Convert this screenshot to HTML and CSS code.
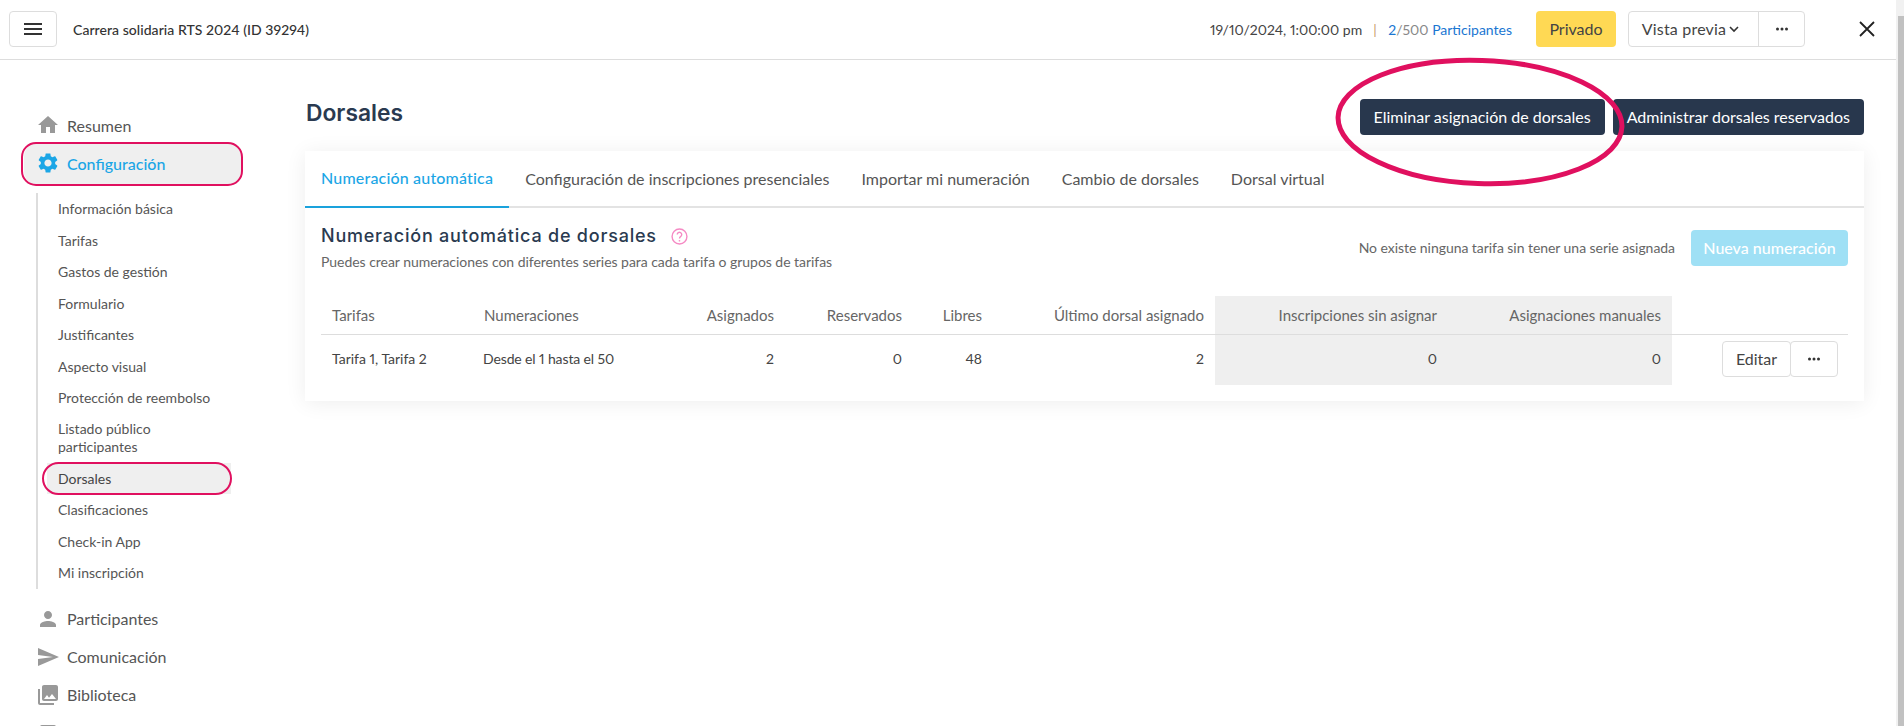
FILE: index.html
```html
<!DOCTYPE html>
<html lang="es">
<head>
<meta charset="utf-8">
<title>Dorsales</title>
<link rel="stylesheet" href="styles.css">
</head>
<body>
<div class="app">
  <header class="topbar">
    <button class="menu-btn"><svg class="ic24" viewBox="0 0 24 24"><path d="M3 18h18v-2H3v2zm0-5h18v-2H3v2zm0-7v2h18V6H3z"/></svg></button>
    <div class="event-title">Carrera solidaria RTS 2024 (ID 39294)</div>
    <div class="top-right">
      <span class="date">19/10/2024, 1:00:00 pm</span>
      <span class="sep">|</span>
      <span class="count"><b>2</b><i>/500</i> Participantes</span>
      <span class="private">Privado</span>
      <div class="group">
        <span class="preview">Vista previa <svg class="chev" viewBox="0 0 12 12"><path d="M2 4l4 4 4-4"/></svg></span>
        <span class="more"><svg class="dots" viewBox="0 0 14 4"><circle cx="2.5" cy="2" r="1.5"/><circle cx="7" cy="2" r="1.5"/><circle cx="11.5" cy="2" r="1.5"/></svg></span>
      </div>
      <svg class="close" viewBox="0 0 16 16"><path d="M1 1l14 14M15 1L1 15"/></svg>
    </div>
  </header>
  <div class="body">
    <nav class="sidebar">
      <a class="nav-item"><svg class="ic24" viewBox="0 0 24 24"><path d="M10 20v-6h4v6h5v-8h3L12 3 2 12h3v8z"/></svg>Resumen</a>
      <a class="nav-item active ring-host"><svg class="ic24" viewBox="0 0 24 24"><path d="M19.14 12.94c.04-.3.06-.61.06-.94 0-.32-.02-.64-.07-.94l2.03-1.58c.18-.14.23-.41.12-.61l-1.92-3.32c-.12-.22-.37-.29-.59-.22l-2.39.96c-.5-.38-1.03-.7-1.62-.94l-.36-2.54c-.04-.24-.24-.41-.48-.41h-3.84c-.24 0-.43.17-.47.41l-.36 2.54c-.59.24-1.13.57-1.62.94l-2.39-.96c-.22-.08-.47 0-.59.22L2.74 8.87c-.12.21-.08.47.12.61l2.03 1.58c-.05.3-.09.63-.09.94s.02.64.07.94l-2.03 1.58c-.18.14-.23.41-.12.61l1.92 3.32c.12.22.37.29.59.22l2.39-.96c.5.38 1.03.7 1.62.94l.36 2.54c.05.24.24.41.48.41h3.84c.24 0 .44-.17.47-.41l.36-2.54c.59-.24 1.13-.56 1.62-.94l2.39.96c.22.08.47 0 .59-.22l1.92-3.32c.12-.22.07-.47-.12-.61l-2.01-1.58zM12 15.6c-1.98 0-3.6-1.62-3.6-3.6s1.62-3.6 3.6-3.6 3.6 1.62 3.6 3.6-1.62 3.6-3.6 3.6z"/></svg>Configuración</a>
      <div class="sub">
        <a class="sub-item">Información básica</a>
        <a class="sub-item">Tarifas</a>
        <a class="sub-item">Gastos de gestión</a>
        <a class="sub-item">Formulario</a>
        <a class="sub-item">Justificantes</a>
        <a class="sub-item">Aspecto visual</a>
        <a class="sub-item">Protección de reembolso</a>
        <a class="sub-item two">Listado público<br>participantes</a>
        <a class="sub-item current ring-host">Dorsales</a>
        <a class="sub-item">Clasificaciones</a>
        <a class="sub-item">Check-in App</a>
        <a class="sub-item">Mi inscripción</a>
      </div>
      <a class="nav-item"><svg class="ic24" viewBox="0 0 24 24"><path d="M12 12c2.21 0 4-1.79 4-4s-1.79-4-4-4-4 1.79-4 4 1.79 4 4 4zm0 2c-2.67 0-8 1.34-8 4v2h16v-2c0-2.66-5.33-4-8-4z"/></svg>Participantes</a>
      <a class="nav-item"><svg class="ic24" viewBox="0 0 24 24"><path d="M2.01 21L23 12 2.01 3 2 10l15 2-15 2z"/></svg>Comunicación</a>
      <a class="nav-item"><svg class="ic24" viewBox="0 0 24 24"><path d="M22 16V4c0-1.1-.9-2-2-2H8c-1.1 0-2 .9-2 2v12c0 1.1.9 2 2 2h12c1.1 0 2-.9 2-2zm-11-4l2.03 2.71L16 11l4 5H8l3-4zM2 6v14c0 1.1.9 2 2 2h14v-2H4V6H2z"/></svg>Biblioteca</a>
      <a class="nav-item"><svg class="ic24" viewBox="0 0 24 24"><rect x="4" y="4" width="16" height="16" rx="2"/></svg></a>
    </nav>
    <main class="main">
      <div class="page-head">
        <h1>Dorsales</h1>
        <div class="head-actions">
          <button class="btn-dark">Eliminar asignación de dorsales</button>
          <button class="btn-dark">Administrar dorsales reservados</button>
        </div>
      </div>
      <section class="card">
        <div class="tabs">
          <a class="tab on">Numeración automática</a>
          <a class="tab">Configuración de inscripciones presenciales</a>
          <a class="tab">Importar mi numeración</a>
          <a class="tab">Cambio de dorsales</a>
          <a class="tab">Dorsal virtual</a>
        </div>
        <div class="card-body">
          <div class="sec-head">
            <div>
              <h2>Numeración automática de dorsales <svg class="help" viewBox="0 0 16 16"><circle cx="8" cy="8" r="7"/><path d="M5.9 6.2a2.1 2.1 0 1 1 3.3 1.7c-.8.5-1.2 1-1.2 1.9"/><circle class="help-dot" cx="8" cy="12" r=".8"/></svg></h2>
              <p>Puedes crear numeraciones con diferentes series para cada tarifa o grupos de tarifas</p>
            </div>
            <div class="sec-right">
              <span class="note">No existe ninguna tarifa sin tener una serie asignada</span>
              <button class="btn-new">Nueva numeración</button>
            </div>
          </div>
          <table class="grid">
            <colgroup>
              <col class="c1"><col class="c2"><col class="c3"><col class="c4"><col class="c5"><col class="c6"><col class="c7"><col class="c8"><col class="c9">
            </colgroup>
            <thead>
              <tr><th>Tarifas</th><th>Numeraciones</th><th class="r">Asignados</th><th class="r">Reservados</th><th class="r">Libres</th><th class="r">Último dorsal asignado</th><th class="r shade">Inscripciones sin asignar</th><th class="r shade">Asignaciones manuales</th><th></th></tr>
            </thead>
            <tbody>
              <tr><td>Tarifa 1, Tarifa 2</td><td class="range">Desde el 1 hasta el 50</td><td class="r">2</td><td class="r">0</td><td class="r">48</td><td class="r">2</td><td class="r shade">0</td><td class="r shade">0</td>
                <td class="act"><div class="row-actions"><button class="btn-out">Editar</button><button class="btn-out dot"><svg class="dots" viewBox="0 0 14 4"><circle cx="2.5" cy="2" r="1.5"/><circle cx="7" cy="2" r="1.5"/><circle cx="11.5" cy="2" r="1.5"/></svg></button></div></td></tr>
            </tbody>
          </table>
        </div>
      </section>
    </main>
  </div>
</div>
<div class="scrollbar"><span class="arrow"></span><span class="thumb"></span></div>
<svg class="big-ring" viewBox="0 0 300 140"><ellipse cx="150" cy="70" rx="142" ry="61.5" transform="rotate(2 150 70)"/></svg>
</body>
</html>
```
FILE: styles.css
```css
*, *::before, *::after { box-sizing: border-box; }
html, body { margin: 0; height: 100%; overflow: hidden; }
body { font-family: Lato, "Liberation Sans", sans-serif; font-variant-numeric: proportional-nums; color: #444; background: #fff; display: flex; position: relative; }
button { font-family: inherit; font-variant-numeric: inherit; cursor: pointer; }
.app { width: 1896px; height: 726px; overflow: hidden; display: flex; flex-direction: column; }
.ic24 { width: 24px; height: 24px; flex: none; fill: currentColor; }

.topbar { height: 60px; flex: none; border-bottom: 1px solid #ddd; display: flex; align-items: center; padding: 0 21px 1px 9px; }
.menu-btn { width: 48px; height: 36px; background: #fff; border: 1px solid #ddd; border-radius: 4px; padding: 0; display: flex; align-items: center; justify-content: center; color: #333; }
.event-title { margin-left: 16px; font-size: 14px; font-weight: 500; color: #333; letter-spacing: .05px; }
.top-right { margin-left: auto; display: flex; align-items: center; font-size: 14px; }
.date { color: #444; }
.sep { color: #c9a06a; margin: 0 11.5px 0 11px; }
.count { color: #1a76d2; }
.count b { font-weight: 400; }
.count i { font-style: normal; color: #888; }
.private { margin-left: 24px; width: 80px; height: 36px; padding-bottom: 1px; background: #ffd954; border-radius: 4px; display: flex; align-items: center; justify-content: center; font-size: 16px; color: #444; }
.group { margin-left: 12px; height: 36px; width: 177px; display: flex; border: 1px solid #ddd; border-radius: 4px; }
.preview { width: 130px; padding: 0 5px 1px 0; border-right: 1px solid #ddd; display: flex; align-items: center; justify-content: center; gap: 2px; font-size: 16px; letter-spacing: .2px; color: #444; }
.chev { width: 12px; height: 12px; fill: none; stroke: #333; stroke-width: 1.6; }
.more { flex: 1; display: flex; align-items: center; justify-content: center; }
.dots { width: 14px; height: 4px; fill: #333; }
.close { margin-left: 54px; width: 16px; height: 16px; fill: none; stroke: #222; stroke-width: 1.8; }

.body { flex: 1; display: flex; min-height: 0; }
.sidebar { width: 305px; flex: none; padding: 46px 0 0 36px; position: relative; z-index: 0; }
.nav-item { height: 38px; display: flex; align-items: center; gap: 7px; font-size: 16px; color: #555; position: relative; }
.nav-item .ic24 { color: #999; }
.nav-item.active { color: #1ba6e6; font-weight: 500; }
.nav-item.active .ic24 { color: #1ba6e6; }
.nav-item.active::before { content: ""; position: absolute; left: -12px; top: -1px; width: 218px; height: 42px; background: #efefef; border-radius: 14px; z-index: -1; }
.ring-host::after { content: ""; position: absolute; border: 2.5px solid #e0105f; }
.nav-item.ring-host::after { left: -15px; top: -2px; width: 222px; height: 44px; border-radius: 15px; }
.sub { margin: 11px 0 11px; padding-left: 9px; border-left: 2px solid #ddd; width: 207px; }
.sub-item { height: 31.5px; display: flex; align-items: center; padding-left: 11px; font-size: 14px; color: #555; position: relative; }
.sub-item.two { height: 49px; line-height: 18px; }
.sub-item.current { background: #efefef; color: #444; width: 184px; }
.sub-item.current::after { left: -5px; top: -1px; width: 190px; height: 33px; border-radius: 17px; }

.main { flex: 1; min-width: 0; padding: 39px 32px 0 0; }
.page-head { display: flex; justify-content: space-between; align-items: flex-start; height: 36px; }
h1 { margin: 0 0 0 1px; font-family: Inter, sans-serif; font-size: 22.8px; font-weight: 600; line-height: 27px; color: #2a3a50; }
.head-actions { display: flex; gap: 8px; }
.btn-dark { height: 36px; padding: 0 14px 2px; background: #28374d; color: #fff; border: 0; border-radius: 4px; font-size: 16px; }
.card { margin-top: 16px; height: 250px; background: #fff; box-shadow: 0 2px 20px rgba(0,0,0,.07); }
.tabs { display: flex; height: 57px; border-bottom: 2px solid #e3e3e3; }
.tab { height: 57px; padding: 0 16px 2px; display: flex; align-items: center; font-size: 16px; color: #555; }
.tab.on { color: #1ba6e6; border-bottom: 2px solid #1aa2dc; font-weight: 500; letter-spacing: .18px; }
.card-body { padding: 0 16px; }
.sec-head { display: flex; justify-content: space-between; height: 88px; padding-top: 16px; }
h2 { margin: 0; font-family: Inter, sans-serif; font-size: 18px; font-weight: 500; line-height: 24px; color: #2a3a50; letter-spacing: .78px; display: flex; align-items: center; gap: 14px; }
.help { width: 17px; height: 17px; fill: none; stroke: #f58ac4; stroke-width: 1.3; }
.help .help-dot { fill: #f58ac4; stroke: none; }
.sec-head p { margin: 5px 0 0; font-size: 14px; line-height: 18px; color: #666; letter-spacing: -.04px; }
.sec-right { display: flex; align-items: flex-start; gap: 16px; padding-top: 6px; }
.note { font-size: 14px; line-height: 36px; color: #666; letter-spacing: -.05px; }
.btn-new { width: 157px; height: 36px; padding: 0 0 2px; background: #9fe0f5; color: #fff; border: 0; border-radius: 4px; font-size: 16px; font-weight: 500; }
.grid { width: 1527px; table-layout: fixed; border-collapse: collapse; font-size: 14px; }
.c1 { width: 152px; } .c2 { width: 167px; } .c3 { width: 145px; } .c4 { width: 128px; } .c5 { width: 80px; }
.c6 { width: 222px; } .c7 { width: 233px; } .c8 { width: 224px; } .c9 { width: 176px; }
.grid th { height: 38px; padding: 0 11px; font-weight: 400; font-size: 15px; color: #666; text-align: left; border-bottom: 1px solid #ddd; }
.grid td { height: 51px; padding: 0 11px 2px 11px; color: #444; }
.grid .r { text-align: right; }
.grid .shade { background: #efefef; }
.grid .range { padding-left: 10px; letter-spacing: -.12px; }
.grid .act { padding-right: 10px; }
.row-actions { display: flex; justify-content: flex-end; }
.btn-out { width: 69px; height: 36px; background: #fff; border: 1px solid #ddd; border-radius: 4px; font-size: 16px; color: #444; padding: 0; }
.btn-out.dot { width: 48px; margin-left: -1px; display: flex; align-items: center; justify-content: center; }

.scrollbar { width: 8px; height: 726px; flex: none; background: #f1f1f1; display: flex; flex-direction: column; align-items: flex-end; }
.arrow { height: 16px; width: 6px; }
.thumb { flex: 1; width: 6px; background: #c1c1c1; }
.big-ring { position: absolute; left: 1330px; top: 52px; width: 300px; height: 140px; fill: none; stroke: #e0105f; stroke-width: 5; }
```
